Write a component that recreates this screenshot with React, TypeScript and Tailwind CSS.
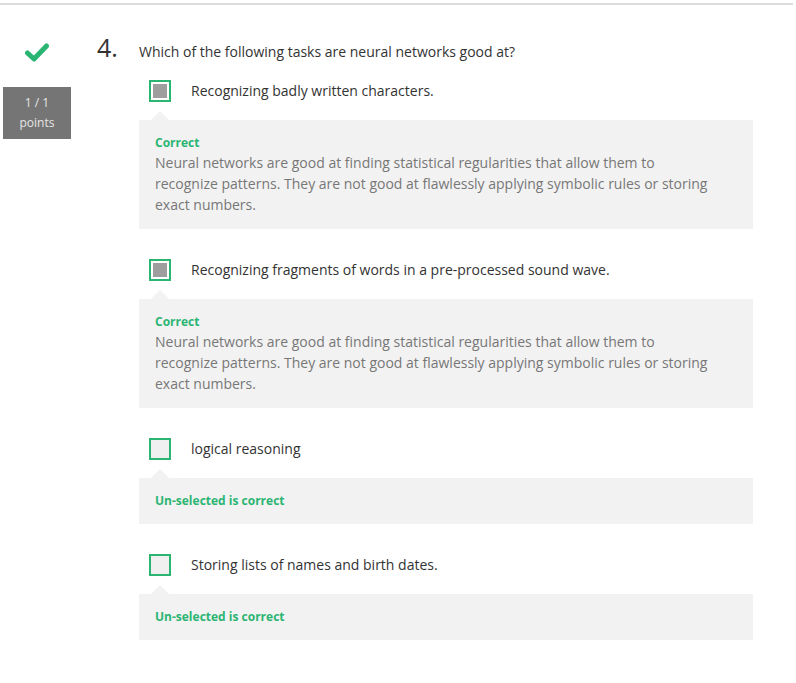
const GREEN = '#2bb573';

type Option = {
  label: string;
  selected: boolean;
  title: string;
  explanation?: string;
};

const options: Option[] = [
  {
    label: 'Recognizing badly written characters.',
    selected: true,
    title: 'Correct',
    explanation:
      'Neural networks are good at finding statistical regularities that allow them to recognize patterns. They are not good at flawlessly applying symbolic rules or storing exact numbers.',
  },
  {
    label: 'Recognizing fragments of words in a pre-processed sound wave.',
    selected: true,
    title: 'Correct',
    explanation:
      'Neural networks are good at finding statistical regularities that allow them to recognize patterns. They are not good at flawlessly applying symbolic rules or storing exact numbers.',
  },
  { label: 'logical reasoning', selected: false, title: 'Un-selected is correct' },
  { label: 'Storing lists of names and birth dates.', selected: false, title: 'Un-selected is correct' },
];

function Checkbox({ checked }: { checked: boolean }) {
  return (
    <div
      className={`flex h-[22px] w-[22px] shrink-0 items-center justify-center border-2 border-[#2bb573] ${
        checked ? 'bg-white' : 'bg-[#f0f0f0]'
      }`}
    >
      {checked && <div className="h-[14px] w-[14px] bg-[#9e9e9e]" />}
    </div>
  );
}

function OptionRow({ option }: { option: Option }) {
  return (
    <div className="mb-[30px]">
      <div className="flex items-center pl-[10px]">
        <Checkbox checked={option.selected} />
        <span className="ml-[20px] text-[14px] leading-[22px] text-[#333]">{option.label}</span>
      </div>
      {/* feedback bubble */}
      <div className="relative mt-[18px] w-[614px] bg-[#f2f2f2] px-4 py-[14px]">
        <div className="absolute -top-[9px] left-[12px] h-0 w-0 border-x-[9px] border-b-[9px] border-x-transparent border-b-[#f2f2f2]" />
        <div className="text-[12px] font-bold leading-[18px]" style={{ color: GREEN }}>
          {option.title}
        </div>
        {option.explanation && (
          <p className="max-w-[560px] text-[14px] leading-[21px] text-[#777]">{option.explanation}</p>
        )}
      </div>
    </div>
  );
}

export default function App() {
  return (
    <div className="min-h-[683px] bg-white pt-[3px]" style={{ fontFamily: '"Open Sans", "Liberation Sans", sans-serif' }}>
      <div className="w-[793px] border-t-2 border-[#dddddd]" />
      <div className="flex pt-[30px]">
        <div className="ml-[3px] flex w-[68px] shrink-0 flex-col items-center">
          <svg width="24" height="19" viewBox="0 0 24 19" className="mt-[8px]">
            <path d="M2.5 10 L9 16 L21.5 3" fill="none" stroke={GREEN} strokeWidth="5" strokeLinecap="round" strokeLinejoin="round" />
          </svg>
          <div className="mt-[25px] flex h-[52px] w-[68px] flex-col items-center justify-center bg-[#757575] text-[12px] leading-[20px] text-[#e6e6e6]">
            <span>1 / 1</span>
            <span>points</span>
          </div>
        </div>
        <div className="ml-[26px] flex-1">
          <div className="flex items-baseline">
            <span className="w-[42px] text-[25px] leading-[25px] text-[#333]">4.</span>
            <span className="text-[14px] text-[#333]">Which of the following tasks are neural networks good at?</span>
          </div>
          <div className="ml-[42px] mt-[18px]">
            {options.map((o) => (
              <OptionRow key={o.label} option={o} />
            ))}
          </div>
        </div>
      </div>
    </div>
  );
}
